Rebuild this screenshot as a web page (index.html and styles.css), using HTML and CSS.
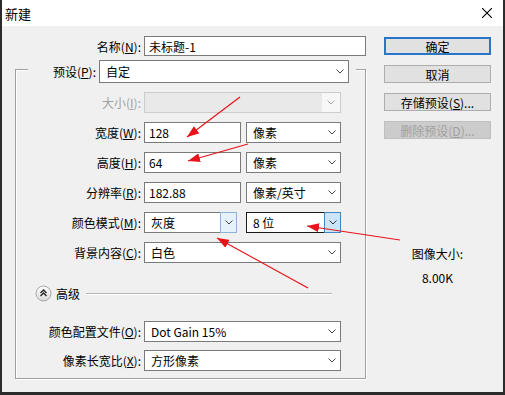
FILE: index.html
```html
<!DOCTYPE html>
<html>
<head>
  <title>新建</title>
  <link rel="stylesheet" href="styles.css">
</head>
<body>
  <div class="window">
    <div class="titlebar">
      <span>新建</span>
      <svg class="close" width="10" height="10" viewBox="0 0 10 10"><path d="M0 0 L10 10 M10 0 L0 10" stroke="#000" stroke-width="1.1" fill="none"/></svg>
    </div>

    <div class="content">
      <div class="form">
        <div class="row name-row">
          <label class="label name-label">名称(<u>N</u>):</label>
          <div class="field name-field">未标题-1</div>
        </div>

        <div class="group">
          <div class="preset">
            <label class="label preset-label">预设(<u>P</u>):</label>
            <div class="field select preset-select">自定<span class="arrow"><svg width="8" height="5" viewBox="0 0 8 5"><path d="M0.5 0.5 L4 4 L7.5 0.5" stroke="#444" fill="none"/></svg></span></div>
          </div>

          <div class="rows first-rows">
            <div class="row">
              <label class="label dim">大小(<u>I</u>):</label>
              <div class="field select wide disabled"><span></span><span class="arrow"><svg width="8" height="5" viewBox="0 0 8 5"><path d="M0.5 0.5 L4 4 L7.5 0.5" stroke="#a8a8a8" fill="none"/></svg></span></div>
            </div>
            <div class="row">
              <label class="label">宽度(<u>W</u>):</label>
              <div class="field num">128</div>
              <div class="field select unit">像素<span class="arrow"><svg width="8" height="5" viewBox="0 0 8 5"><path d="M0.5 0.5 L4 4 L7.5 0.5" stroke="#444" fill="none"/></svg></span></div>
            </div>
            <div class="row">
              <label class="label">高度(<u>H</u>):</label>
              <div class="field num">64</div>
              <div class="field select unit">像素<span class="arrow"><svg width="8" height="5" viewBox="0 0 8 5"><path d="M0.5 0.5 L4 4 L7.5 0.5" stroke="#444" fill="none"/></svg></span></div>
            </div>
            <div class="row">
              <label class="label">分辨率(<u>R</u>):</label>
              <div class="field num">182.88</div>
              <div class="field select unit">像素/英寸<span class="arrow"><svg width="8" height="5" viewBox="0 0 8 5"><path d="M0.5 0.5 L4 4 L7.5 0.5" stroke="#444" fill="none"/></svg></span></div>
            </div>
            <div class="row">
              <label class="label">颜色模式(<u>M</u>):</label>
              <div class="field select mode">灰度<span class="arrow hover"><svg width="8" height="5" viewBox="0 0 8 5"><path d="M0.5 0.5 L4 4 L7.5 0.5" stroke="#444" fill="none"/></svg></span></div>
              <div class="field select unit focused">8 位<span class="arrow pressed"><svg width="8" height="5" viewBox="0 0 8 5"><path d="M0.5 0.5 L4 4 L7.5 0.5" stroke="#333" fill="none"/></svg></span></div>
            </div>
            <div class="row">
              <label class="label">背景内容(<u>C</u>):</label>
              <div class="field select wide">白色<span class="arrow"><svg width="8" height="5" viewBox="0 0 8 5"><path d="M0.5 0.5 L4 4 L7.5 0.5" stroke="#444" fill="none"/></svg></span></div>
            </div>
          </div>

          <div class="advanced">
            <svg class="toggle" width="17" height="17" viewBox="0 0 17 17">
              <defs>
                <linearGradient id="knob" x1="0" y1="0" x2="0" y2="1">
                  <stop offset="0" stop-color="#ffffff"/>
                  <stop offset="1" stop-color="#d9d9d9"/>
                </linearGradient>
              </defs>
              <circle cx="8.5" cy="8.5" r="7.5" fill="url(#knob)" stroke="#a6a6a6"/>
              <path d="M5.5 8 L8.5 5 L11.5 8 M5.5 11 L8.5 8 L11.5 11" stroke="#222" stroke-width="1.3" fill="none"/>
            </svg>
            <span class="adv-text">高级</span>
            <span class="adv-line"></span>
          </div>

          <div class="rows last-rows">
            <div class="row">
              <label class="label">颜色配置文件(<u>O</u>):</label>
              <div class="field select wide">Dot Gain 15%<span class="arrow"><svg width="8" height="5" viewBox="0 0 8 5"><path d="M0.5 0.5 L4 4 L7.5 0.5" stroke="#444" fill="none"/></svg></span></div>
            </div>
            <div class="row">
              <label class="label">像素长宽比(<u>X</u>):</label>
              <div class="field select wide">方形像素<span class="arrow"><svg width="8" height="5" viewBox="0 0 8 5"><path d="M0.5 0.5 L4 4 L7.5 0.5" stroke="#444" fill="none"/></svg></span></div>
            </div>
          </div>
        </div>
      </div>

      <div class="side">
        <div class="btn default">确定</div>
        <div class="btn">取消</div>
        <div class="btn">存储预设(<u>S</u>)...</div>
        <div class="btn disabled">删除预设(<u>D</u>)...</div>

        <div class="info">
          <div>图像大小:</div>
          <div class="info-size">8.00K</div>
        </div>
      </div>
    </div>
  </div>

  <!-- red annotation arrows drawn over the dialog -->
  <svg class="marks" width="505" height="395" viewBox="0 0 505 395">
    <defs>
      <marker id="head" markerUnits="userSpaceOnUse" markerWidth="13" markerHeight="9" refX="12" refY="4.5" orient="auto">
        <path d="M0 0 L12 4.5 L0 9 Z" fill="#e8131a"/>
      </marker>
    </defs>
    <line x1="240" y1="97" x2="187" y2="137" marker-end="url(#head)"/>
    <line x1="248" y1="144" x2="188" y2="161" marker-end="url(#head)"/>
    <line x1="400" y1="240" x2="307" y2="226" marker-end="url(#head)"/>
    <line x1="308" y1="288" x2="217" y2="238" marker-end="url(#head)"/>
  </svg>
</body>
</html>
```

FILE: styles.css
```css
* {
  box-sizing: border-box;
}

body {
  margin: 0;
  width: 505px;
  height: 395px;
  overflow: hidden;
  position: relative;
  background-color: #2b2b2b;
  font-family: "Noto Sans CJK SC", "Microsoft YaHei", sans-serif;
  font-size: 12px;
  color: #000;
}

u {
  text-decoration: underline;
  text-underline-offset: 1px;
}

.window {
  margin-left: 2px;
  width: 501px;
  height: 392px;
  background-color: #f0f0f0;
}

.titlebar {
  height: 26px;
  background-color: #fff;
  display: flex;
  align-items: center;
  justify-content: space-between;
  padding: 0 11px 0 3px;
  font-size: 13px;
}

.content {
  display: flex;
  padding: 10px 0 0 13px;
}

.form {
  width: 351px;
}

.row {
  display: flex;
  align-items: center;
  height: 21px;
}

.label {
  flex: none;
  width: 128px;
  padding-right: 3px;
  text-align: right;
  white-space: nowrap;
}

.label.dim {
  color: #a0a0a0;
}

.name-row {
  height: 20px;
}

.name-label {
  width: 129px;
}

.field {
  height: 21px;
  border: 1px solid #7a7a7a;
  background-color: #fff;
  display: flex;
  align-items: center;
  padding-left: 4px;
  white-space: nowrap;
}

.name-field {
  width: 224px;
  height: 20px;
}

.select {
  justify-content: space-between;
  padding-left: 6px;
}

.arrow {
  flex: none;
  width: 17px;
  align-self: stretch;
  display: flex;
  align-items: center;
  justify-content: center;
}

.arrow.hover {
  margin: -1px -1px -1px 0;
  border: 1px solid #8db2d4;
  background-color: #e5f1fb;
}

.arrow.pressed {
  margin: -1px -1px -1px 0;
  border: 1px solid #3f86c4;
  background-color: #cce4f7;
}

.select.focused {
  border-color: #1a1a1a;
}

.select.disabled {
  background-color: #e9e9e9;
  border-color: #cccccc;
}

.select.disabled .arrow {
  width: 18px;
  background-color: #f7f7f7;
}

/* group box with the preset row sitting on its top edge */
.group {
  margin-top: 13px;
  border: 1px solid #a0a0a0;
  box-shadow: 1px 1px 0 #fff, inset 1px 1px 0 #fff;
  padding-bottom: 7px;
}

.preset {
  margin: -10px 0 0 12px;
  width: 328px;
  height: 23px;
  display: flex;
  align-items: center;
  background-color: #f0f0f0;
}

.preset-label {
  width: 71px;
}

.preset-select {
  width: 250px;
  height: 23px;
}

.rows {
  display: flex;
  flex-direction: column;
}

.first-rows {
  margin-top: 9px;
  gap: 9px;
}

.last-rows {
  margin-top: 19px;
  gap: 8px;
}

.wide {
  width: 197px;
}

.num {
  width: 97px;
  margin-right: 5px;
}

.unit {
  width: 95px;
}

.mode {
  width: 93px;
  margin-right: 9px;
}

.advanced {
  margin-top: 22px;
  height: 17px;
  padding-left: 19px;
  display: flex;
  align-items: center;
}

.toggle {
  flex: none;
}

.adv-text {
  margin-left: 4px;
  font-size: 12px;
}

.adv-line {
  margin-left: 6px;
  width: 246px;
  height: 1px;
  background-color: #b4b4b4;
  box-shadow: 0 1px 0 #fff;
}

.side {
  margin-left: 18px;
  width: 107px;
  padding-top: 1px;
}

.btn {
  height: 18px;
  margin-bottom: 10px;
  border: 1px solid #adadad;
  background-color: #e1e1e1;
  display: flex;
  align-items: center;
  justify-content: center;
  white-space: nowrap;
}

.btn.default {
  border: 2px solid #2a76c6;
}

.btn.disabled {
  color: #a0a0a0;
  background-color: #cccccc;
  border-color: #bfbfbf;
}

.info {
  margin-top: 107px;
  text-align: center;
  line-height: 16px;
}

.info-size {
  margin-top: 8px;
}

.marks {
  position: absolute;
  left: 0;
  top: 0;
  pointer-events: none;
}

.marks line {
  stroke: #e8131a;
  stroke-width: 1.2;
}
```
